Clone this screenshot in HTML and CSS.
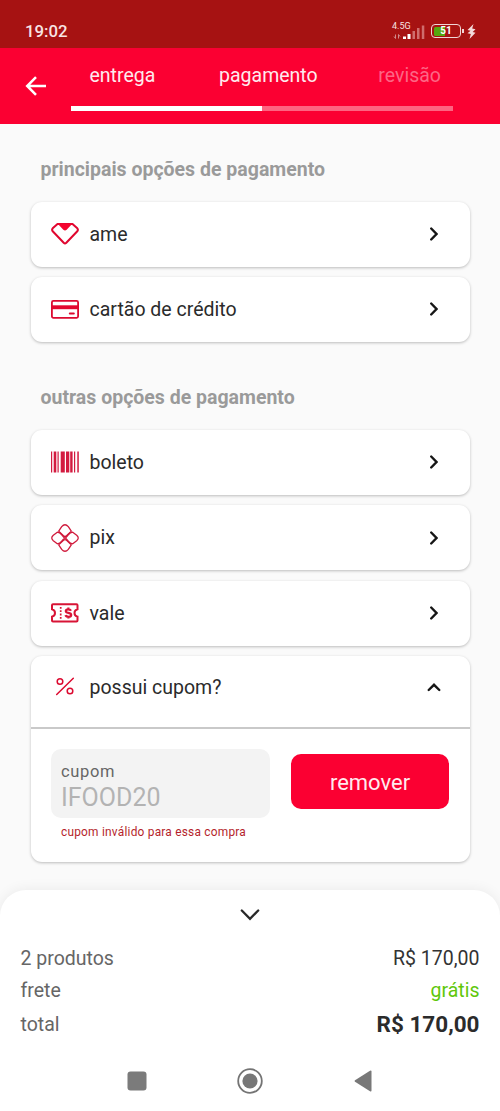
FILE: index.html
```html
<!DOCTYPE html>
<html lang="pt-BR">
<head>
    <meta charset="UTF-8">
    <meta name="viewport" content="width=device-width, initial-scale=1.0">
    <title>Pagamento</title>
    <link rel="stylesheet" href="styles.css">
</head>
<body>
    <div class="status-bar">
        <span class="clock">19:02</span>
        <div class="status-icons">
            <div class="network">
                <span class="network-type">4.5G</span>
                <svg class="signal" width="33" height="16" viewBox="0 0 33 16">
                    <path d="M3.500 14.500V10.500M2 12.500L3.500 14.500M6.500 14.500v-4L8 12.500" fill="none" stroke="#d08a8a" stroke-width="1"/>
                    <path d="M11 12.500h3V15h-3zM15.500 10h3v5h-3z" fill="#fff"/>
                    <path d="M20.500 7h2.500v8h-2.500zM25 4h2.500v11H25zM29.800 1.500h2.500V15h-2.500z" fill="#cf6d6d"/>
                </svg>
            </div>
            <div class="battery"><span>51</span></div>
            <svg class="bolt" width="9" height="15" viewBox="0 0 9 15">
                <path d="M6.500 0L0.500 6L3.500 6.700L0.500 9.300L3.800 10L2.500 15L8.500 8.700L5.700 8L8.500 5.200L5.200 4.500z" fill="#f4dada"/>
            </svg>
        </div>
    </div>

    <header class="header">
        <svg class="back" width="22" height="20" viewBox="0 0 22 20">
            <path d="M21 10H2M11 1.200L2.200 10L11 18.800" fill="none" stroke="#fff" stroke-width="2.500"/>
        </svg>
        <div class="steps">
            <div class="step-names">
                <span>entrega</span>
                <span class="current">pagamento</span>
                <span class="pending">revisão</span>
            </div>
            <div class="progress"><div class="progress-done"></div></div>
        </div>
    </header>

    <main class="content">
        <h2>principais opções de pagamento</h2>
        <div class="options">
            <div class="card option">
                <svg class="icon" width="28" height="28" viewBox="0 0 28 28">
                    <path d="M6.500 4H21.500L26.300 8.300Q27.500 9.800 26.300 11.300L15.300 22.800Q14 24 12.700 22.800L1.700 11.300Q0.500 9.800 1.700 8.300z" fill="none" stroke="#e0062f" stroke-width="2" stroke-linejoin="round"/>
                    <path d="M6.500 3.500H21.500L15.700 9.800Q14 11.400 12.300 9.800z" fill="#f5052f"/>
                </svg>
                <span>ame</span>
                <svg class="chevron" width="8" height="14" viewBox="0 0 8 14"><path d="M1.200 1.500L6.500 7L1.200 12.500"/></svg>
            </div>
            <div class="card option">
                <svg class="icon" width="28" height="28" viewBox="0 0 28 28">
                    <rect x="0.900" y="5.900" width="26.200" height="16.900" rx="1.500" fill="none" stroke="#dc0a30" stroke-width="1.800"/>
                    <path d="M1 10.300h26v3.900H1z" fill="#e3082f"/>
                    <path d="M18.800 18.500h4" stroke="#dc0a30" stroke-width="2" stroke-linecap="round"/>
                </svg>
                <span>cartão de crédito</span>
                <svg class="chevron" width="8" height="14" viewBox="0 0 8 14"><path d="M1.200 1.500L6.500 7L1.200 12.500"/></svg>
            </div>
        </div>

        <h2 class="others">outras opções de pagamento</h2>
        <div class="options">
            <div class="card option">
                <svg class="icon" width="28" height="28" viewBox="0 0 28 28">
                    <path d="M0 3.500h1.200v21H0zM2.700 3.500h2.600v21H2.700zM6.500 3.500h1.200v21H6.500zM9.700 3.500h4.100v21H9.700zM15 3.500h3.300v21H15zM19.200 3.500h2.400v21h-2.400zM23 3.500h1.200v21H23zM26.300 3.500h1.500v21h-1.500z" fill="#d31b40"/>
                </svg>
                <span>boleto</span>
                <svg class="chevron" width="8" height="14" viewBox="0 0 8 14"><path d="M1.200 1.500L6.500 7L1.200 12.500"/></svg>
            </div>
            <div class="card option">
                <svg class="icon" width="28" height="28" viewBox="0 0 28 28">
                    <g fill="none" stroke="#d01a3c" stroke-width="1.300" stroke-linejoin="round">
                        <path d="M7.700 7.100L10.700 2.700Q14 -1.200 17.300 2.700L20.300 7.100L15.500 11.700Q14 13 12.500 11.700z"/>
                        <path d="M7.700 20.900L10.700 25.300Q14 29.200 17.300 25.300L20.300 20.900L15.500 16.300Q14 15 12.500 16.300z"/>
                        <path d="M6.300 8.200L2.300 11.300Q-0.800 14 2.300 16.700L6.300 19.800Q9 19.500 10.500 17.500L13.500 14L10.500 10.500Q9 8.500 6.300 8.200z"/>
                        <path d="M21.700 8.200L25.700 11.300Q28.800 14 25.700 16.700L21.700 19.800Q19 19.500 17.500 17.500L14.500 14L17.500 10.500Q19 8.500 21.700 8.200z"/>
                    </g>
                </svg>
                <span>pix</span>
                <svg class="chevron" width="8" height="14" viewBox="0 0 8 14"><path d="M1.200 1.500L6.500 7L1.200 12.500"/></svg>
            </div>
            <div class="card option">
                <svg class="icon" width="28" height="28" viewBox="0 0 28 28">
                    <path d="M2 5.300H25.500Q26.500 5.300 26.500 6.300V10.200Q23.500 11 23.500 13.900T26.500 17.600V21.500Q26.500 22.500 25.500 22.500H2Q1 22.500 1 21.500V17.600Q4 16.800 4 13.900T1 10.200V6.300Q1 5.300 2 5.300z" fill="none" stroke="#d81436" stroke-width="2"/>
                    <path d="M9.700 8V20" stroke="#d81436" stroke-width="1.700" stroke-dasharray="1.800 1.500"/>
                    <path d="M20 11.700Q19.300 10.300 17.300 10.300Q14.800 10.300 14.800 12.100Q14.800 13.500 17.300 13.900Q20.200 14.300 20.200 16Q20.200 17.800 17.500 17.800Q15 17.800 14.500 16.200M17.400 8.500V10.300M17.400 17.800V19.500" fill="none" stroke="#d81436" stroke-width="2.200"/>
                </svg>
                <span>vale</span>
                <svg class="chevron" width="8" height="14" viewBox="0 0 8 14"><path d="M1.200 1.500L6.500 7L1.200 12.500"/></svg>
            </div>
            <div class="card coupon">
                <div class="coupon-title">
                    <svg class="icon" width="28" height="28" viewBox="0 0 28 28">
                        <g fill="none" stroke="#dc0a30" stroke-width="1.500" stroke-linecap="round">
                            <path d="M5.700 21.500L22.300 5.200"/>
                            <circle cx="9" cy="8.500" r="2.800"/>
                            <circle cx="19" cy="18" r="2.800"/>
                        </g>
                    </svg>
                    <span>possui cupom?</span>
                    <svg class="chevron up" width="14" height="9" viewBox="0 0 14 9"><path d="M1.700 7L7 1.800L12.300 7"/></svg>
                </div>
                <form class="coupon-form">
                    <div class="coupon-field">
                        <div class="field">
                            <span class="field-label">cupom</span>
                            <span class="field-value">IFOOD20</span>
                        </div>
                        <p class="error">cupom inválido para essa compra</p>
                    </div>
                    <button type="button" class="remove">remover</button>
                </form>
            </div>
        </div>
    </main>

    <footer class="summary">
        <svg class="expand" width="20" height="12" viewBox="0 0 20 12">
            <path d="M1.800 1.500L10 9.800L18.200 1.500" fill="none" stroke="#292929" stroke-width="2.300" stroke-linecap="round"/>
        </svg>
        <div class="line">
            <span>2 produtos</span>
            <span class="price">R$ 170,00</span>
        </div>
        <div class="line">
            <span>frete</span>
            <span class="free">grátis</span>
        </div>
        <div class="line total">
            <span>total</span>
            <strong>R$ 170,00</strong>
        </div>
        <nav class="nav-bar">
            <svg width="20" height="26" viewBox="0 0 20 26"><rect x="0.500" y="3.500" width="19" height="19" rx="3" fill="#7b7b7b"/></svg>
            <svg width="26" height="26" viewBox="0 0 26 26">
                <circle cx="13" cy="13" r="11.800" fill="none" stroke="#747474" stroke-width="1.800"/>
                <circle cx="13" cy="13" r="7.600" fill="#777"/>
            </svg>
            <svg width="18" height="26" viewBox="0 0 18 26"><path d="M1 12.300L16 2.700Q17.500 2 17.500 3.500V22.500Q17.500 24 16 23.300L1 13.700Q0 13 1 12.300z" fill="#787878"/></svg>
        </nav>
    </footer>
</body>
</html>
```
FILE: styles.css
```css
* {
    box-sizing: border-box;
}

body {
    margin: 0;
    padding: 0;
    height: 1111px;
    display: flex;
    flex-direction: column;
    overflow: hidden;
    font-family: Roboto, "Liberation Sans", sans-serif;
    font-size: 19.500px;
    color: #2b2b2b;
    background: #fafafa;
}

svg {
    display: block;
    flex-shrink: 0;
}

.status-bar {
    height: 48px;
    padding: 14px 24px 0 25px;
    display: flex;
    justify-content: space-between;
    align-items: center;
    background: #a61212;
    color: #f8e4e4;
}

.clock {
    font-size: 16.800px;
    font-weight: 500;
}

.status-icons {
    display: flex;
    align-items: center;
}

.network {
    width: 33px;
    height: 18px;
    display: grid;
    margin-right: 6px;
}

.network > * {
    grid-area: 1 / 1;
}

.network-type {
    font-size: 9px;
    line-height: 9px;
}

.signal {
    align-self: end;
}

.battery {
    width: 30px;
    height: 14px;
    margin-right: 6px;
    border: 1.500px solid #f0d5d5;
    border-radius: 4px;
    padding: 1.500px;
    background: linear-gradient(to right, #55a80f 45%, #a61212 45%) content-box;
    position: relative;
    display: flex;
    justify-content: center;
    align-items: center;
    font-size: 10px;
    font-weight: 700;
    line-height: 10px;
    color: #fff;
}

.battery::after {
    content: "";
    position: absolute;
    right: -4px;
    top: 4px;
    width: 2px;
    height: 4px;
    background: #f0d5d5;
}

.header {
    height: 76px;
    padding: 0 47px 0 25px;
    display: flex;
    background: #fb0032;
    color: #ffeaee;
}

.back {
    margin-top: 28px;
    margin-right: 24px;
}

.steps {
    flex: 1;
}

.step-names {
    height: 58px;
    padding: 16px 12px 0 18.500px;
    display: flex;
    justify-content: space-between;
    line-height: 24px;
}

.current {
    margin-left: 3px;
}

.pending {
    color: #fd6685;
}

.progress {
    height: 5px;
    background: #fd6481;
}

.progress-done {
    width: 50%;
    height: 100%;
    background: #fff;
}

.content {
    flex: 1;
    padding: 0 30.500px;
}

h2 {
    margin: 0;
    padding: 32.600px 10px 0;
    height: 77.600px;
    font-size: 19.500px;
    line-height: 26px;
    font-weight: 700;
    color: #9a9a9a;
}

h2.others {
    padding-top: 43px;
    height: 88px;
}

.options {
    display: flex;
    flex-direction: column;
    gap: 10.400px;
}

.card {
    border-radius: 11px;
    background: #fff;
    box-shadow: 0 1px 3px rgba(0, 0, 0, 0.25);
}

.option,
.coupon-title {
    display: flex;
    align-items: center;
    gap: 11px;
    padding: 0 32px 0 20px;
}

.option {
    height: 65px;
}

.chevron {
    margin-left: auto;
    fill: none;
    stroke: #161616;
    stroke-width: 2.400;
    stroke-linecap: round;
}

.chevron.up {
    margin-right: -3px;
}

.coupon {
    height: 205.500px;
}

.coupon-title {
    height: 72.500px;
    padding-bottom: 8px;
    border-bottom: 2px solid #c9c9c9;
}

.coupon-form {
    display: flex;
    justify-content: space-between;
    padding: 20px 20.500px 0;
}

.coupon-field {
    width: 219px;
}

.field {
    height: 69px;
    padding: 12px 10px 0;
    border-radius: 10px;
    background: #f3f3f3;
    display: flex;
    flex-direction: column;
}

.field-label {
    font-size: 16.500px;
    line-height: 22px;
    letter-spacing: 0.650px;
    color: #666;
}

.field-value {
    font-size: 25px;
    line-height: 30px;
    color: #b3b3b3;
}

.error {
    margin: 6px 0 0 10px;
    font-size: 11.900px;
    line-height: 16px;
    letter-spacing: 0.220px;
    color: #b51f2c;
    white-space: nowrap;
}

.remove {
    width: 158px;
    height: 55px;
    margin-top: 5px;
    padding: 3px 0 0;
    border: none;
    border-radius: 10px;
    background: #fb0032;
    color: #ffeaee;
    font-family: inherit;
    font-size: 22px;
}

.summary {
    height: 221.500px;
    padding: 19px 20.500px 0;
    border-radius: 26px 26px 0 0;
    background: #fff;
    box-shadow: 0 0 14px rgba(0, 0, 0, 0.07);
}

.expand {
    margin: 0 auto 21.500px;
}

.line {
    height: 32px;
    display: flex;
    justify-content: space-between;
    align-items: center;
    color: #666;
}

.total {
    height: 36px;
}

.price {
    color: #333;
}

.free {
    color: #5fc70c;
}

.total strong {
    font-size: 22.500px;
    color: #2b2b2b;
}

.nav-bar {
    display: flex;
    justify-content: space-between;
    padding: 25.500px 107.500px 0 106px;
}
```
